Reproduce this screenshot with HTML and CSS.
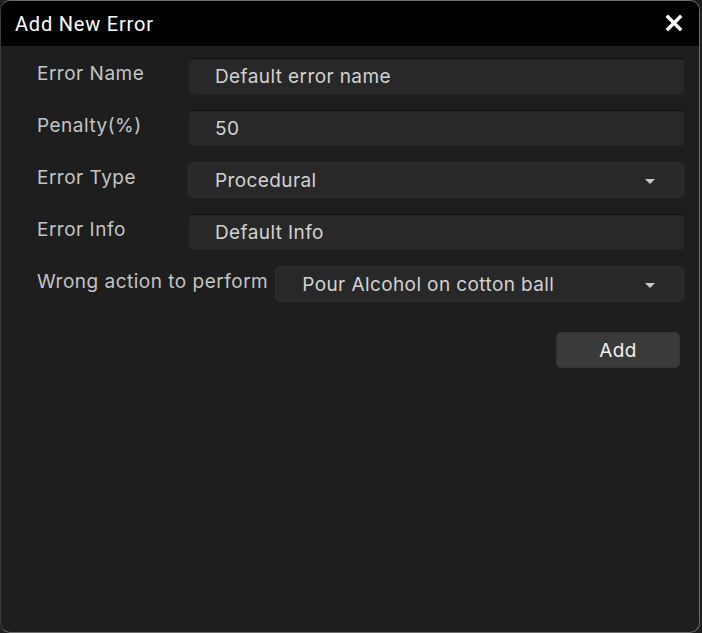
FILE: index.html
```html
<!DOCTYPE html>
<html>
<head>
<meta charset="utf-8">
<link rel="stylesheet" href="styles.css">
</head>
<body>
<div class="dialog">
  <div class="header">
    <span class="title">Add New Error</span>
    <span class="close" aria-label="close">
      <svg width="18" height="18" viewBox="0 0 18 18"><path d="M3 3 L15 15 M15 3 L3 15" stroke="#fff" stroke-width="3.4" stroke-linecap="square"/></svg>
    </span>
  </div>
  <div class="content">
    <div class="row">
      <label class="label">Error Name</label>
      <div class="field">Default error name</div>
    </div>
    <div class="row">
      <label class="label">Penalty(%)</label>
      <div class="field">50</div>
    </div>
    <div class="row">
      <label class="label">Error Type</label>
      <div class="field select">Procedural<span class="arrow"></span></div>
    </div>
    <div class="row">
      <label class="label">Error Info</label>
      <div class="field">Default Info</div>
    </div>
    <div class="row">
      <label class="label">Wrong action to perform</label>
      <div class="field select">Pour Alcohol on cotton ball<span class="arrow"></span></div>
    </div>
    <div class="actions">
      <button class="btn">Add</button>
    </div>
  </div>
</div>
</body>
</html>
```
FILE: styles.css
```css
html, body {
  margin: 0;
  padding: 0;
  background: #1e1e1e;
}
body {
  font-family: Inter, "Noto Sans", sans-serif;
  width: 702px;
  height: 633px;
  overflow: hidden;
}
.dialog {
  box-sizing: border-box;
  width: 700px;
  height: 633px;
  background: #1e1e1e;
  border: 1px solid #6e6e6e;
  border-left-color: #3a3a3a;
  border-radius: 10px;
  overflow: hidden;
  display: flex;
  flex-direction: column;
}
.header {
  height: 45px;
  flex: none;
  background: #000;
  display: flex;
  align-items: center;
  justify-content: space-between;
  padding: 0 16px 0 14px;
}
.title {
  color: #fff;
  font-size: 20px;
  letter-spacing: 0.8px;
  font-family: Roboto, Inter, sans-serif;
}
.close {
  display: flex;
  width: 18px;
  height: 18px;
  margin-top: -2px;
}
.content {
  padding: 12px 15px 0 36px;
  display: flex;
  flex-direction: column;
  gap: 16px;
}
.row {
  display: flex;
  align-items: flex-start;
}
.label {
  flex: none;
  min-width: 144px;
  margin-right: 8px;
  color: #c4c4c4;
  font-size: 19px;
  letter-spacing: 0.5px;
  line-height: 32px;
  white-space: nowrap;
}
.field {
  flex: 1;
  box-sizing: border-box;
  height: 36px;
  background: #282828;
  border-top: 1px solid #0e0e0e;
  border-radius: 4px;
  color: #d2d2d2;
  font-size: 19px;
  letter-spacing: 0.4px;
  line-height: 35px;
  padding-left: 26px;
  position: relative;
}
.select {
  border: 1px solid #303030;
  border-radius: 5px;
  margin-left: -1px;
  line-height: 36px;
  padding-left: 26px;
}
.arrow {
  position: absolute;
  right: 28px;
  top: 16px;
  width: 0;
  height: 0;
  border-left: 5px solid transparent;
  border-right: 5px solid transparent;
  border-top: 5px solid #c8c8c8;
}
.actions {
  display: flex;
  justify-content: flex-end;
  padding-top: 14px;
  padding-right: 4px;
}
.btn {
  width: 124px;
  height: 36px;
  background: #3a3a3a;
  border: 1px solid #333;
  border-radius: 5px;
  color: #f0f0f0;
  font-family: Inter, sans-serif;
  font-size: 19px;
  letter-spacing: 0.4px;
  padding: 0;
}
```
